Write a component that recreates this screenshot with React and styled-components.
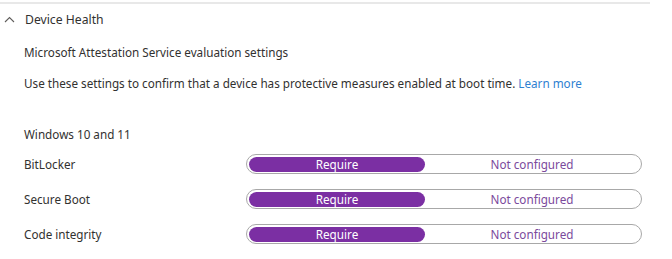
import React from 'react';
import styled, { createGlobalStyle } from 'styled-components';

const Global = createGlobalStyle`
  html, body { margin: 0; padding: 0; background: #ffffff; }
  body {
    font-family: "Noto Sans", "Open Sans", sans-serif;
    color: #323130;
    font-size: 11.7px;
  }
`;

const Page = styled.div`
  width: 672px;
  height: 259px;
  overflow: hidden;
`;

const TopRule = styled.div`
  width: 650px;
  height: 2px;
  background: #e8e8e8;
  margin-top: 2px;
`;

const Header = styled.div`
  display: flex;
  align-items: center;
  height: 28px;
  margin-top: 1px;
  padding-left: 4px;
  gap: 10px;
  font-size: 12.2px;
`;

const Body = styled.div`
  padding-left: 24px;
`;

const Line = styled.div`
  height: 16px;
  line-height: 16px;
  margin-top: ${p => p.$top}px;
  white-space: nowrap;
`;

const Link = styled.a`
  color: #2f7fd1;
  text-decoration: none;
`;

const Row = styled.div`
  display: flex;
  align-items: center;
  height: 20px;
  margin-top: ${p => p.$top}px;
`;

const Label = styled.div`
  width: 222px;
`;

const Toggle = styled.div`
  box-sizing: border-box;
  width: 396px;
  height: 20px;
  border: 1.5px solid #a8a8a8;
  border-radius: 10px;
  display: flex;
  align-items: center;
  padding: 0 2px;
`;

const Option = styled.div`
  box-sizing: border-box;
  height: 15px;
  border-radius: 8px;
  display: flex;
  align-items: center;
  justify-content: center;
  font-size: 11.7px;
  width: ${p => (p.$active ? '176px' : 'auto')};
  flex: ${p => (p.$active ? 'none' : '1')};
  background: ${p => (p.$active ? '#7b2fa3' : 'transparent')};
  color: ${p => (p.$active ? '#ffffff' : '#7b4a9c')};
`;

const Chevron = () => (
  <svg width="11" height="7" viewBox="0 0 11 7" fill="none">
    <path d="M1 6L5.5 1.5L10 6" stroke="#605e5c" strokeWidth="1.1" />
  </svg>
);

const settings = ['BitLocker', 'Secure Boot', 'Code integrity'];

export default function App() {
  return (
    <Page>
      <Global />
      <TopRule />
      <Header>
        <Chevron />
        <span>Device Health</span>
      </Header>
      <Body>
        <Line $top={11}>Microsoft Attestation Service evaluation settings</Line>
        <Line $top={15}>
          Use these settings to confirm that a device has protective measures enabled at boot time.{' '}
          <Link href="#">Learn more</Link>
        </Line>
        <Line $top={35}>Windows 10 and 11</Line>
        {settings.map((s, i) => (
          <Row key={s} $top={i === 0 ? 12 : 15}>
            <Label>{s}</Label>
            <Toggle>
              <Option $active>Require</Option>
              <Option>Not configured</Option>
            </Toggle>
          </Row>
        ))}
      </Body>
    </Page>
  );
}
